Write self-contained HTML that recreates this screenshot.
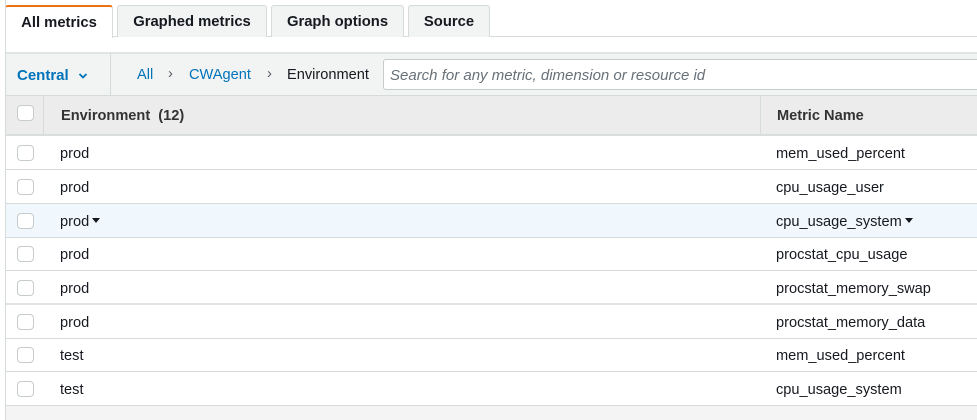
<!DOCTYPE html>
<html><head><style>
*{margin:0;padding:0;box-sizing:border-box}
body{width:977px;height:420px;overflow:hidden;background:#fff;font-family:"Liberation Sans",Arial,sans-serif;font-size:14.6px;color:#16191f;position:relative}
.a{position:absolute}
.tab{position:absolute;top:5px;height:32px;background:#f2f3f3;border:1px solid #d5dbdb;border-bottom:none;border-radius:3px 3px 0 0;font-weight:bold;color:#16191f;font-size:14.8px;line-height:32px;text-align:center}
.row{position:absolute;left:6px;right:0;height:34px;border-bottom:1px solid #d5dbdb}
.cb{position:absolute;left:11px;top:9px;width:17px;height:16px;border:1px solid #c6cbcb;border-radius:4px;background:#fff}
.t1{position:absolute;left:54px;top:1px;line-height:34px}
.t2{position:absolute;left:770px;top:1px;line-height:34px}
.car{display:inline-block;width:0;height:0;border-left:4px solid transparent;border-right:4px solid transparent;border-top:5px solid #16191f;vertical-align:middle;margin-left:3px;margin-top:-3px}
</style></head><body>
<div class="a" style="left:5px;top:0;width:1px;height:420px;background:#d5dbdb"></div>
<div class="a" style="left:5px;top:36px;right:0;height:1px;background:#d5dbdb"></div>
<div class="tab" style="left:5px;width:108px;background:#fff;border-top:2px solid #ec7211;height:33px">All metrics</div>
<div class="tab" style="left:117px;width:150px">Graphed metrics</div>
<div class="tab" style="left:271px;width:133px">Graph options</div>
<div class="tab" style="left:408px;width:82px">Source</div>
<div class="a" style="left:6px;top:52px;right:0;height:43px;background:#f2f3f3;border-top:2px solid #e1e4e4"></div>
<div class="a" style="left:110px;top:53px;width:1px;height:42px;background:#d5dbdb"></div>
<div class="a" style="left:17px;top:67px;color:#0073bb;font-weight:bold;font-size:15px">Central <svg width="10" height="8" viewBox="0 0 10 8" style="margin-left:5px"><path d="M1.5 2l3.5 3.5L8.5 2" stroke="#0073bb" stroke-width="1.8" fill="none"/></svg></div>
<div class="a" style="left:137px;top:67px;color:#0073bb">All</div>
<div class="a" style="left:168px;top:66px;color:#545b64">›</div>
<div class="a" style="left:189px;top:67px;color:#0073bb">CWAgent</div>
<div class="a" style="left:267px;top:66px;color:#545b64">›</div>
<div class="a" style="left:287px;top:67px;color:#16191f">Environment</div>
<div class="a" style="left:383px;top:59px;width:600px;height:31px;background:#fff;border:1px solid #c6cbcb;border-radius:3px;color:#687078;font-style:italic;font-size:15px;padding-left:6px;line-height:31px">Search for any metric, dimension or resource id</div>
<div class="a" style="left:6px;top:95px;right:0;height:41px;background:#ececec;border-bottom:2px solid #dadede;border-top:1px solid #d5dbdb"></div>
<div class="a" style="left:43px;top:95px;width:1px;height:40px;background:#d5dbdb"></div>
<div class="a" style="left:760px;top:95px;width:1px;height:40px;background:#d5dbdb"></div>
<div class="a" style="left:17px;top:105px;width:17px;height:16px;border:1px solid #c6cbcb;border-radius:4px;background:#fff"></div>
<div class="a" style="left:61px;top:108px;font-weight:bold;color:#333">Environment&nbsp; (12)</div>
<div class="a" style="left:777px;top:108px;font-weight:bold;color:#333">Metric Name</div>
<div class="row" style="top:136px"><div class="cb"></div><div class="t1">prod</div><div class="t2">mem_used_percent</div></div>
<div class="row" style="top:170px"><div class="cb"></div><div class="t1">prod</div><div class="t2">cpu_usage_user</div></div>
<div class="row" style="top:204px;background:#f1f8fd"><div class="cb"></div><div class="t1">prod<span class="car"></span></div><div class="t2">cpu_usage_system<span class="car"></span></div></div>
<div class="row" style="top:237px"><div class="cb"></div><div class="t1">prod</div><div class="t2">procstat_cpu_usage</div></div>
<div class="row" style="top:271px;border-bottom:2px solid #e1e4e4"><div class="cb"></div><div class="t1">prod</div><div class="t2">procstat_memory_swap</div></div>
<div class="row" style="top:305px"><div class="cb"></div><div class="t1">prod</div><div class="t2">procstat_memory_data</div></div>
<div class="row" style="top:338px"><div class="cb"></div><div class="t1">test</div><div class="t2">mem_used_percent</div></div>
<div class="row" style="top:372px"><div class="cb"></div><div class="t1">test</div><div class="t2">cpu_usage_system</div></div>
<div class="a" style="left:6px;top:406px;right:0;height:14px;background:#f4f4f4"></div>
</body></html>
